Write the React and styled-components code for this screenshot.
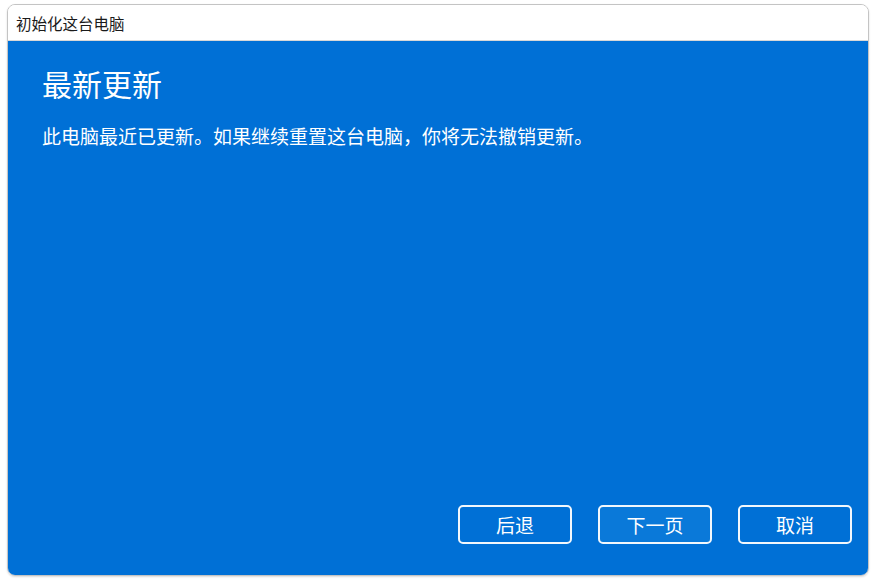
import React from 'react'
import styled, { createGlobalStyle } from 'styled-components'

const Global = createGlobalStyle`
  html, body {
    margin: 0;
    padding: 0;
    background: #ffffff;
  }
  body {
    font-family: "Noto Sans CJK SC", "Noto Sans", sans-serif;
  }
`

const Page = styled.div`
  width: 876px;
  height: 584px;
  padding: 4px 7px 8px 7px;
  box-sizing: border-box;
  display: flex;
`

const Window = styled.div`
  flex: 1;
  display: flex;
  flex-direction: column;
  border: 1px solid #c4c4c4;
  border-radius: 8px;
  overflow: hidden;
  box-shadow: 0 1px 2px rgba(0, 0, 0, 0.15);
`

const TitleBar = styled.div`
  height: 35px;
  background: #ffffff;
  display: flex;
  align-items: center;
  padding-left: 8px;
  font-size: 15.5px;
  color: #1a1a1a;
  border-bottom: 1px solid #d8d8d8;
`

const Body = styled.div`
  flex: 1;
  background: #0070d6;
  color: #ffffff;
  display: flex;
  flex-direction: column;
  padding: 21px 16px 31px 34px;
`

const Heading = styled.h1`
  margin: 0;
  font-size: 30px;
  font-weight: 400;
  line-height: 42px;
`

const Message = styled.p`
  margin: 19px 0 0 0;
  font-size: 19px;
  line-height: 26px;
`

const Actions = styled.div`
  margin-top: auto;
  display: flex;
  justify-content: flex-end;
  gap: 26px;
`

const Button = styled.button`
  width: 114px;
  height: 39px;
  border: 2px solid #f2f7fc;
  border-radius: 5px;
  background: ${p => (p.$focused ? '#0a79d9' : 'transparent')};
  color: #ffffff;
  font-family: inherit;
  font-size: 19px;
  cursor: pointer;
`

export default function App() {
  return (
    <Page>
      <Global />
      <Window>
        <TitleBar>初始化这台电脑</TitleBar>
        <Body>
          <Heading>最新更新</Heading>
          <Message>此电脑最近已更新。如果继续重置这台电脑，你将无法撤销更新。</Message>
          <Actions>
            <Button>后退</Button>
            <Button $focused>下一页</Button>
            <Button>取消</Button>
          </Actions>
        </Body>
      </Window>
    </Page>
  )
}
